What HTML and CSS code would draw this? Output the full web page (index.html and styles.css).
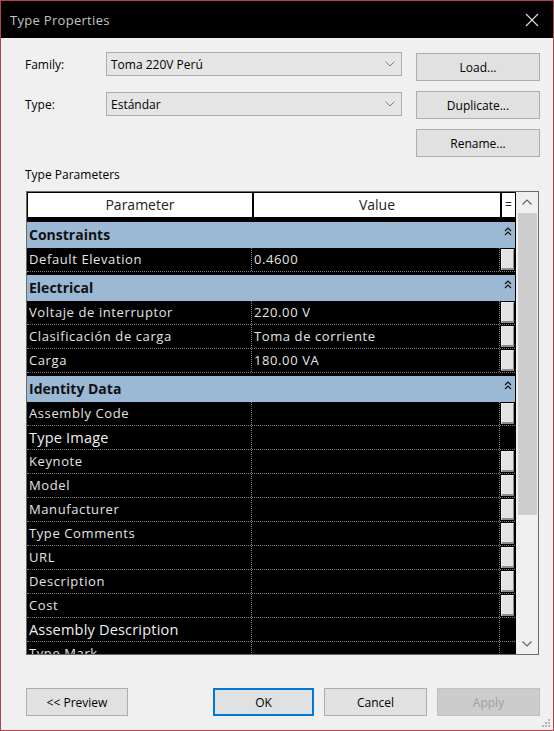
FILE: index.html
```html
<!DOCTYPE html>
<html>
<head>
	<title>Type Properties</title>
	<link rel="stylesheet" href="styles.css">
</head>
<body>
	<div class="dialog">
		<div class="title-bar">
			<span class="title">Type Properties</span>
			<svg class="close-icon" width="14" height="14" viewBox="0 0 14 14"><path d="M1 1 L13 13 M13 1 L1 13" stroke="#e0e0e0" stroke-width="1.1" fill="none"/></svg>
		</div>
		<div class="dialog-body">
			<div class="top-area">
				<div class="fields">
					<div class="field-row">
						<label>Family:</label>
						<div class="combo">
							<span>Toma 220V Perú</span>
							<svg width="10" height="6" viewBox="0 0 10 6"><path d="M0.5 0.5 L5 5 L9.5 0.5" stroke="#808080" fill="none"/></svg>
						</div>
					</div>
					<div class="field-row">
						<label>Type:</label>
						<div class="combo">
							<span>Estándar</span>
							<svg width="10" height="6" viewBox="0 0 10 6"><path d="M0.5 0.5 L5 5 L9.5 0.5" stroke="#808080" fill="none"/></svg>
						</div>
					</div>
				</div>
				<div class="side-buttons">
					<button class="btn side-btn">Load...</button>
					<button class="btn side-btn">Duplicate...</button>
					<button class="btn side-btn">Rename...</button>
				</div>
			</div>

			<div class="section-label">Type Parameters</div>

			<div class="param-table">
				<div class="grid">
					<div class="grid-header">
						<div class="head-cell">Parameter</div>
						<div class="head-cell">Value</div>
						<div class="head-cell eq">=</div>
					</div>

					<div class="group">
						<div class="group-name">Constraints</div>
						<div class="group-toggle"><svg width="8" height="9" viewBox="0 0 8 9"><path d="M1 4 L4 1 L7 4 M1 8 L4 5 L7 8" stroke="#111" stroke-width="1.2" fill="none"/></svg></div>
					</div>
					<div class="row"><div class="cell">Default Elevation</div><div class="cell">0.4600</div><div class="eq-cell"><span class="eq-btn"></span></div></div>

					<div class="group">
						<div class="group-name">Electrical</div>
						<div class="group-toggle"><svg width="8" height="9" viewBox="0 0 8 9"><path d="M1 4 L4 1 L7 4 M1 8 L4 5 L7 8" stroke="#111" stroke-width="1.2" fill="none"/></svg></div>
					</div>
					<div class="row"><div class="cell">Voltaje de interruptor</div><div class="cell">220.00 V</div><div class="eq-cell"><span class="eq-btn"></span></div></div>
					<div class="row"><div class="cell">Clasificación de carga</div><div class="cell">Toma de corriente</div><div class="eq-cell"><span class="eq-btn"></span></div></div>
					<div class="row"><div class="cell">Carga</div><div class="cell">180.00 VA</div><div class="eq-cell"><span class="eq-btn"></span></div></div>

					<div class="group">
						<div class="group-name">Identity Data</div>
						<div class="group-toggle"><svg width="8" height="9" viewBox="0 0 8 9"><path d="M1 4 L4 1 L7 4 M1 8 L4 5 L7 8" stroke="#111" stroke-width="1.2" fill="none"/></svg></div>
					</div>
					<div class="row"><div class="cell">Assembly Code</div><div class="cell"></div><div class="eq-cell"><span class="eq-btn"></span></div></div>
					<div class="row"><div class="cell big">Type Image</div><div class="cell"></div><div class="eq-cell"></div></div>
					<div class="row"><div class="cell">Keynote</div><div class="cell"></div><div class="eq-cell"><span class="eq-btn"></span></div></div>
					<div class="row"><div class="cell">Model</div><div class="cell"></div><div class="eq-cell"><span class="eq-btn"></span></div></div>
					<div class="row"><div class="cell">Manufacturer</div><div class="cell"></div><div class="eq-cell"><span class="eq-btn"></span></div></div>
					<div class="row"><div class="cell">Type Comments</div><div class="cell"></div><div class="eq-cell"><span class="eq-btn"></span></div></div>
					<div class="row"><div class="cell">URL</div><div class="cell"></div><div class="eq-cell"><span class="eq-btn"></span></div></div>
					<div class="row"><div class="cell">Description</div><div class="cell"></div><div class="eq-cell"><span class="eq-btn"></span></div></div>
					<div class="row"><div class="cell">Cost</div><div class="cell"></div><div class="eq-cell"><span class="eq-btn"></span></div></div>
					<div class="row"><div class="cell big">Assembly Description</div><div class="cell"></div><div class="eq-cell"></div></div>
					<div class="row"><div class="cell">Type Mark</div><div class="cell"></div><div class="eq-cell"></div></div>
				</div>
				<div class="scrollbar">
					<div class="scroll-arrow"><svg width="10" height="6" viewBox="0 0 10 6"><path d="M0.5 5.5 L5 1 L9.5 5.5" stroke="#606060" stroke-width="1.1" fill="none"/></svg></div>
					<div class="scroll-track"><div class="scroll-thumb"></div></div>
					<div class="scroll-arrow"><svg width="10" height="6" viewBox="0 0 10 6"><path d="M0.5 0.5 L5 5 L9.5 0.5" stroke="#606060" stroke-width="1.1" fill="none"/></svg></div>
				</div>
			</div>

			<div class="footer">
				<button class="btn preview-btn">&lt;&lt; Preview</button>
				<div class="footer-right">
					<button class="btn ok-btn">OK</button>
					<button class="btn cancel-btn">Cancel</button>
					<button class="btn apply-btn">Apply</button>
				</div>
			</div>
		</div>
		<svg class="grip" width="10" height="10" viewBox="0 0 10 10">
			<rect x="7" y="1" width="2" height="2" fill="#b8b8b8"/>
			<rect x="4" y="4" width="2" height="2" fill="#b8b8b8"/>
			<rect x="7" y="4" width="2" height="2" fill="#b8b8b8"/>
			<rect x="1" y="7" width="2" height="2" fill="#b8b8b8"/>
			<rect x="4" y="7" width="2" height="2" fill="#b8b8b8"/>
			<rect x="7" y="7" width="2" height="2" fill="#b8b8b8"/>
		</svg>
	</div>
</body>
</html>
```

FILE: styles.css
```css
:root {
  --window-bg: #f0f0f0;
  --accent-border: #b4444f;
  --group-blue: #9bb8d5;
  --button-bg: #e1e1e1;
  --button-border: #adadad;
  --grid-line: #7c7c7c;
}

body {
  margin: 0;
  background-color: var(--window-bg);
}

.dialog {
  position: relative;
  width: 554px;
  height: 731px;
  box-sizing: border-box;
  border: 1px solid var(--accent-border);
  display: flex;
  flex-direction: column;
  background-color: var(--window-bg);
  font-family: "Open Sans", "Noto Sans", sans-serif;
  font-size: 12px;
  color: #000;
}

.title-bar {
  height: 37px;
  flex: none;
  background-color: #000;
  display: flex;
  align-items: center;
  justify-content: space-between;
  padding: 0 14px 0 9px;
}

.title {
  color: #c4c4c4;
  font-size: 13px;
  letter-spacing: 0.3px;
}

.dialog-body {
  flex: 1;
  padding: 14px 13px 0 24px;
}

.top-area {
  display: flex;
  justify-content: space-between;
}

.field-row {
  display: flex;
  align-items: center;
  height: 24px;
  margin-bottom: 16px;
}

.field-row label {
  width: 81px;
}

.combo {
  width: 296px;
  height: 24px;
  box-sizing: border-box;
  border: 1px solid #adadad;
  background-color: #e5e5e5;
  display: flex;
  align-items: center;
  justify-content: space-between;
  padding: 0 6px 0 4px;
}

.side-buttons {
  display: flex;
  flex-direction: column;
  gap: 10px;
  margin-top: 1px;
}

.btn {
  font-family: "Open Sans", "Noto Sans", sans-serif;
  font-size: 12px;
  color: #000;
  background-color: var(--button-bg);
  border: 1px solid var(--button-border);
  box-sizing: border-box;
  padding: 0;
}

.side-btn {
  width: 124px;
  height: 28px;
}

.section-label {
  margin-top: 10px;
  line-height: 16px;
  margin-bottom: 8px;
}

/* parameter grid */
.param-table {
  margin-left: 1px;
  width: 513px;
  height: 464px;
  box-sizing: border-box;
  border: 1px solid #6a6a6a;
  display: flex;
  background-color: #000;
}

.grid {
  flex: 1;
  overflow: hidden;
}

.grid-header {
  display: grid;
  grid-template-columns: 225px 248px 15px;
  height: 27px;
  box-sizing: border-box;
  border-top: 1px solid #000;
  border-bottom: 2px solid #000;
}

.head-cell {
  background-color: #fff;
  text-align: center;
  font-size: 14px;
  line-height: 24px;
  color: #222;
  border-left: 2px solid #000;
}

.head-cell:first-child {
  border-left: 1px solid #000;
}

.head-cell.eq {
  font-size: 12px;
}

.group {
  display: grid;
  grid-template-columns: 473px 15px;
  height: 29px;
  box-sizing: border-box;
  border-top: 3px solid #000;
  background-color: var(--group-blue);
}

.group-name {
  font-weight: bold;
  font-size: 14px;
  line-height: 25px;
  padding-left: 2px;
  color: #111;
}

.group-toggle {
  display: flex;
  justify-content: center;
  padding-top: 5px;
}

.row {
  display: grid;
  grid-template-columns: 225px 248px 15px;
  height: 24px;
  box-sizing: border-box;
  border-bottom: 1px dotted var(--grid-line);
}

.cell {
  border-right: 1px dotted var(--grid-line);
  color: #e4e4e4;
  font-size: 13px;
  letter-spacing: 0.6px;
  line-height: 23px;
  padding-left: 2px;
  white-space: nowrap;
  overflow: hidden;
}

.cell.big {
  font-size: 14.5px;
  letter-spacing: 0.2px;
  color: #f0f0f0;
}

.eq-cell {
  padding: 1px 1px 0 1px;
}

.eq-btn {
  display: block;
  height: 21px;
  box-sizing: border-box;
  background-color: #e3e3e3;
  border: 1px solid #ededed;
  border-right-color: #8c8c8c;
  border-bottom: 2px solid #8c8c8c;
}

.scrollbar {
  width: 23px;
  box-sizing: border-box;
  border-left: 1px solid #000;
  background-color: var(--window-bg);
  display: flex;
  flex-direction: column;
}

.scroll-arrow {
  height: 20px;
  display: flex;
  align-items: center;
  justify-content: center;
}

.scroll-track {
  flex: 1;
  padding: 1px 1px 0 2px;
}

.scroll-thumb {
  height: 302px;
  background-color: #cdcdcd;
}

.footer {
  margin-top: 33px;
  margin-left: 1px;
  display: flex;
  justify-content: space-between;
}

.footer .btn {
  height: 28px;
}

.preview-btn {
  width: 102px;
}

.footer-right {
  display: flex;
  gap: 10px;
}

.ok-btn {
  width: 101px;
  border: 2px solid #0078d7;
}

.cancel-btn {
  width: 103px;
}

.apply-btn {
  width: 103px;
  background-color: #cccccc;
  border-color: #bfbfbf;
  color: #a0a0a0;
}

.grip {
  position: absolute;
  right: 2px;
  bottom: 2px;
}
```
